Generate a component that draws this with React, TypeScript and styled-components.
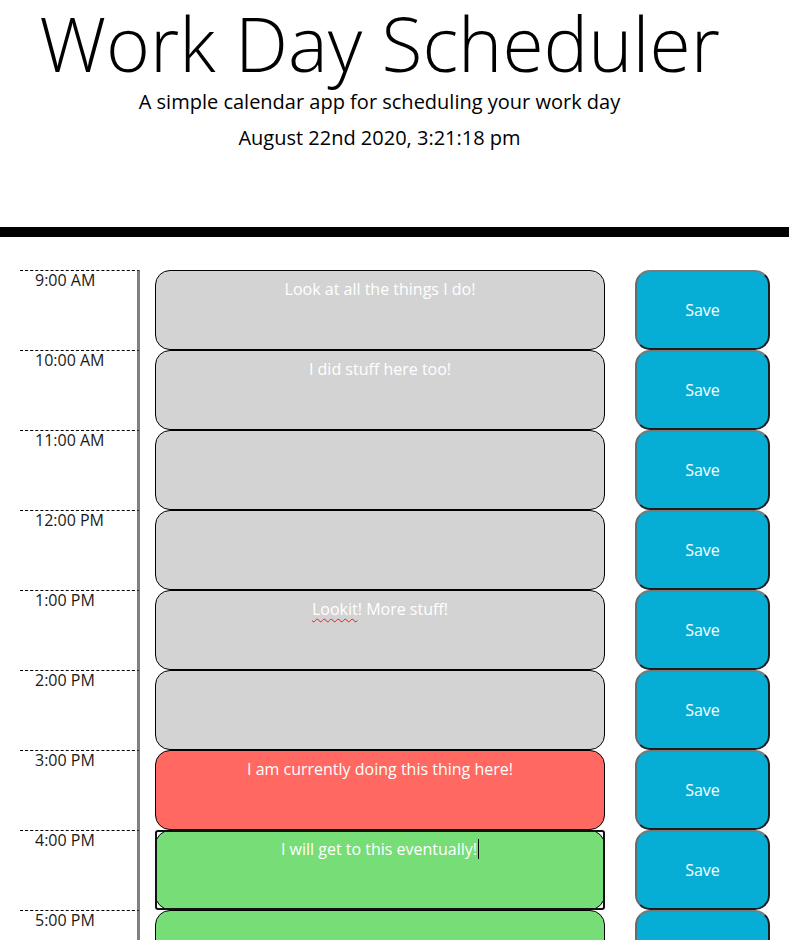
import React from 'react'
import styled, { createGlobalStyle } from 'styled-components'

const GlobalStyle = createGlobalStyle`
  body {
    margin: 0;
    background: #ffffff;
    font-family: "Open Sans", "Liberation Sans", sans-serif;
    color: #000000;
  }
`

const Jumbotron = styled.header`
  padding: 0 30px 0 0;
  height: 227px;
  border-bottom: 10px solid #000000;
  text-align: center;
`

const Title = styled.h1`
  margin: 0;
  font-size: 75px;
  font-weight: 300;
  line-height: 86px;
`

const Lead = styled.p`
  margin: 1px 0 0;
  font-size: 20px;
  font-weight: 400;
  line-height: 30px;
`

const CurrentDay = styled.p`
  margin: 6px 0 0;
  font-size: 20px;
  font-weight: 400;
  line-height: 30px;
`

const Planner = styled.main`
  padding: 33px 0 0 20px;
  height: 670px;
  overflow: hidden;
`

const Row = styled.div`
  display: flex;
  height: 80px;
`

const Hour = styled.div`
  box-sizing: border-box;
  width: 120px;
  padding: 0 0 0 15px;
  border-top: 1px dashed #000000;
  border-right: 3px solid #808080;
  font-size: 16px;
  line-height: 18px;
  color: #1a1a1a;
`

const Cell = styled.div<{ $focused?: boolean }>`
  position: relative;
  margin-left: 15px;
  width: 450px;
  height: 80px;

  &::after {
    content: '';
    display: ${p => (p.$focused ? 'block' : 'none')};
    position: absolute;
    inset: 0;
    border: 2px solid #111111;
    border-radius: 3px;
    pointer-events: none;
  }
`

const tones = {
  past: '#d3d3d3',
  present: '#ff6961',
  future: '#77dd77',
}

const Entry = styled.div<{ $tone: keyof typeof tones }>`
  box-sizing: border-box;
  height: 80px;
  padding: 6px 10px;
  border: 1px solid #000000;
  border-radius: 15px;
  background: ${p => tones[p.$tone]};
  color: #ffffff;
  font-size: 16px;
  line-height: 24px;
  text-align: center;
  white-space: pre-wrap;
`

const Misspelled = styled.span`
  text-decoration: underline wavy #e02020;
  text-decoration-thickness: 1px;
  text-underline-offset: 3px;
`

const Caret = styled.span`
  display: inline-block;
  width: 1px;
  height: 20px;
  margin-left: 1px;
  vertical-align: -4px;
  background: #000000;
`

const SaveBtn = styled.button`
  box-sizing: border-box;
  margin-left: 30px;
  width: 135px;
  height: 80px;
  border: 2px solid;
  border-color: #7a7a7a #1e1e1e #1e1e1e #6a6a6a;
  border-radius: 15px;
  background: #06aed5;
  color: #ffffff;
  font-family: "Open Sans", "Liberation Sans", sans-serif;
  font-size: 16px;
  padding: 0;
`

type Slot = {
  hour: string
  tone: keyof typeof tones
  text?: React.ReactNode
  focused?: boolean
}

const slots: Slot[] = [
  { hour: '9:00 AM', tone: 'past', text: 'Look at all the things I do!' },
  { hour: '10:00 AM', tone: 'past', text: 'I did stuff here too!' },
  { hour: '11:00 AM', tone: 'past' },
  { hour: '12:00 PM', tone: 'past' },
  { hour: '1:00 PM', tone: 'past', text: <><Misspelled>Lookit</Misspelled>! More stuff!</> },
  { hour: '2:00 PM', tone: 'past' },
  { hour: '3:00 PM', tone: 'present', text: 'I am currently doing this thing here!' },
  { hour: '4:00 PM', tone: 'future', text: <>I will get to this eventually!<Caret /></>, focused: true },
  { hour: '5:00 PM', tone: 'future' },
]

export default function App() {
  return (
    <>
      <GlobalStyle />
      <Jumbotron>
        <Title>Work Day Scheduler</Title>
        <Lead>A simple calendar app for scheduling your work day</Lead>
        <CurrentDay>August 22nd 2020, 3:21:18 pm</CurrentDay>
      </Jumbotron>
      <Planner>
        {slots.map(slot => (
          <Row key={slot.hour}>
            <Hour>{slot.hour}</Hour>
            <Cell $focused={slot.focused}>
              <Entry $tone={slot.tone}>{slot.text}</Entry>
            </Cell>
            <SaveBtn>Save</SaveBtn>
          </Row>
        ))}
      </Planner>
    </>
  )
}
